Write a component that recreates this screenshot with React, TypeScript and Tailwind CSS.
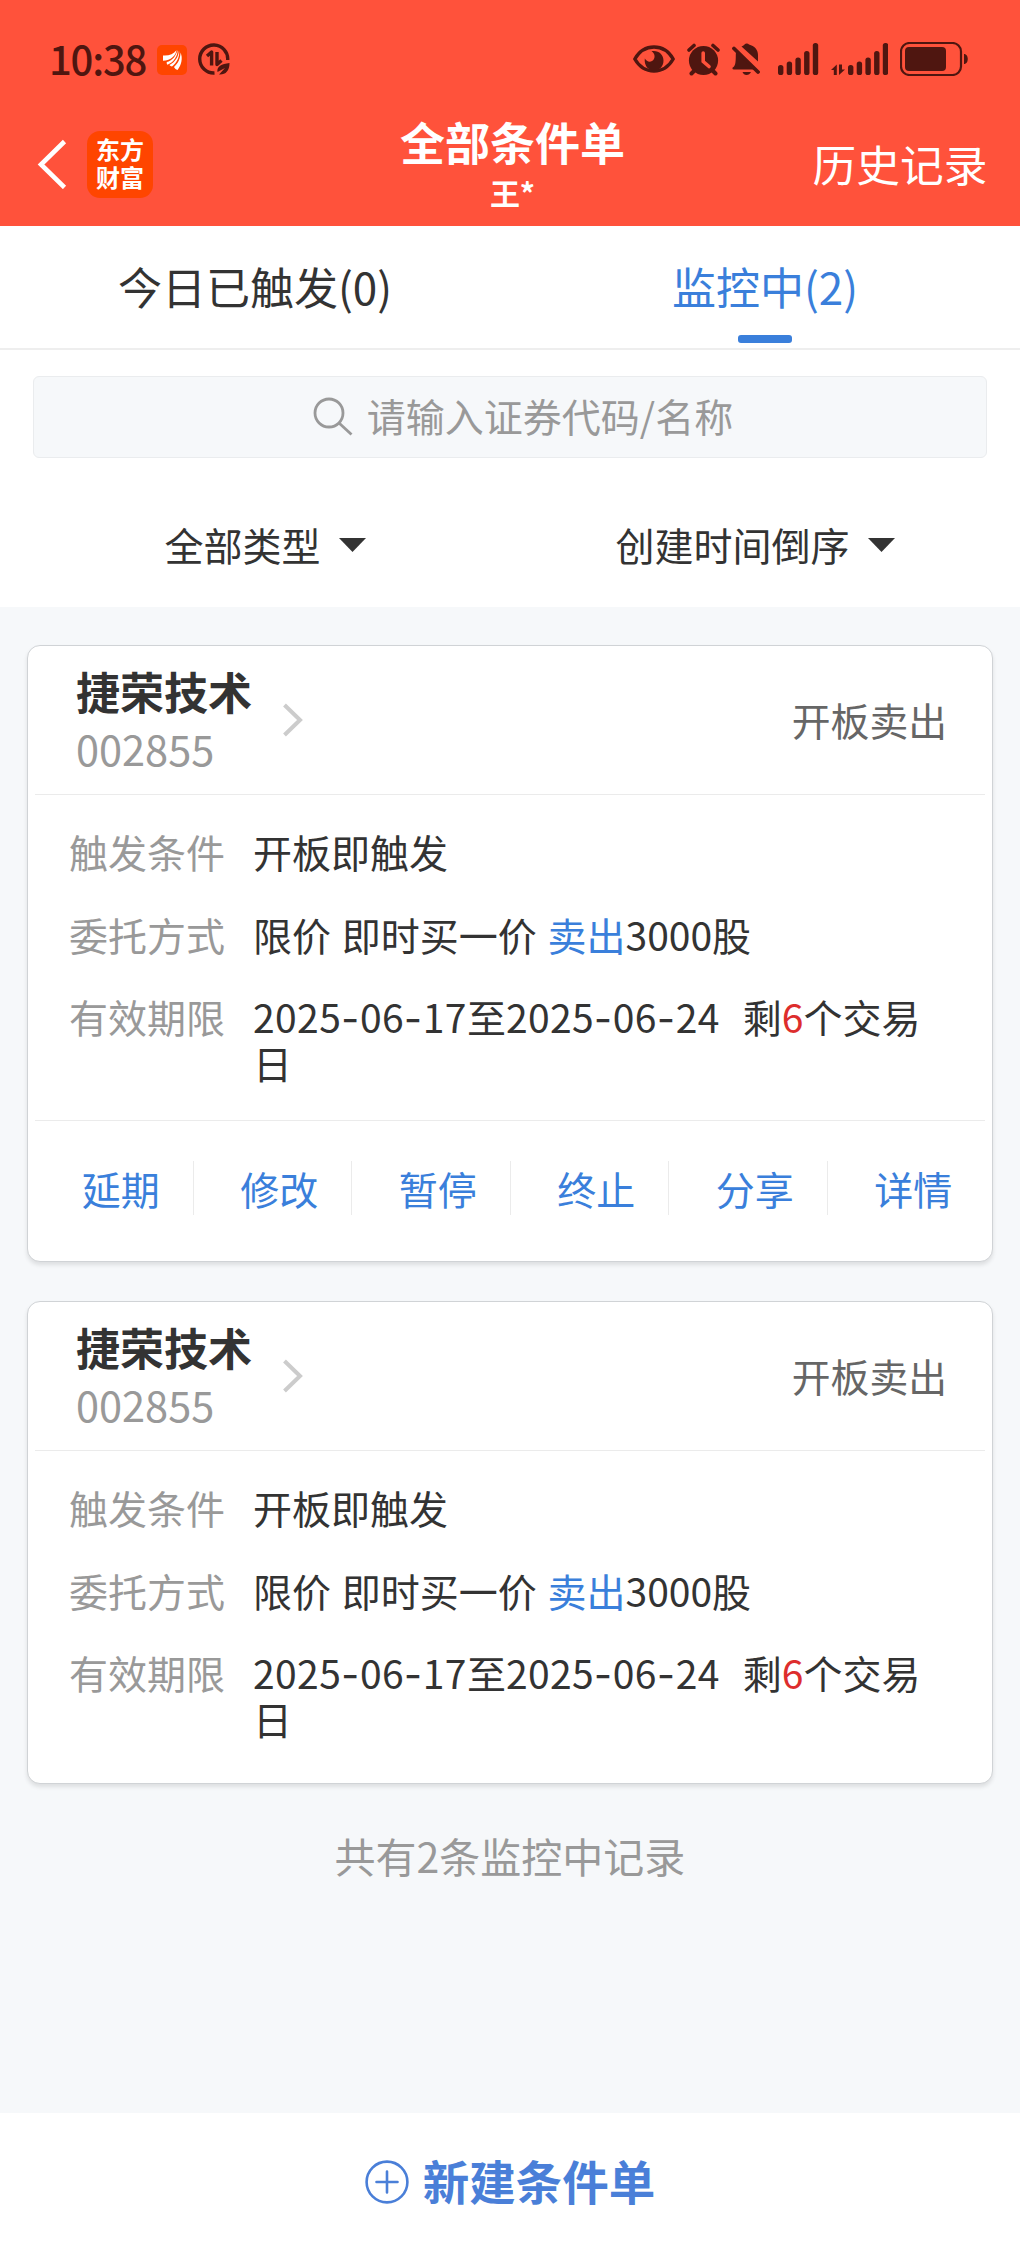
import { useState, type ReactNode } from "react";

type Order = {
  id: number;
  name: string;
  code: string;
  kind: string;
  condition: string;
  priceType: string;
  side: string;
  amount: string;
  from: string;
  to: string;
  daysLeft: number;
  expanded: boolean;
};

const baseOrder = {
  name: "捷荣技术",
  code: "002855",
  kind: "开板卖出",
  condition: "开板即触发",
  priceType: "限价 即时买一价",
  side: "卖出",
  amount: "3000股",
  from: "2025-06-17",
  to: "2025-06-24",
  daysLeft: 6,
};

const orders: Order[] = [
  { id: 1, ...baseOrder, expanded: true },
  { id: 2, ...baseOrder, expanded: false },
];

const tabs = ["今日已触发(0)", "监控中(2)"];
const filters = ["全部类型", "创建时间倒序"];
const actions = ["延期", "修改", "暂停", "终止", "分享", "详情"];

function SignalBars() {
  return (
    <g>
      <rect x="0" y="22" width="5.4" height="10" rx="2.6" />
      <rect x="8.7" y="18.5" width="5.4" height="13.5" rx="2.6" />
      <rect x="17.4" y="14.5" width="5.4" height="17.5" rx="2.6" />
      <rect x="26.1" y="8" width="5.4" height="24" rx="2.6" />
      <rect x="34.8" y="0" width="5.4" height="32" rx="2.6" />
    </g>
  );
}

function StatusBar() {
  return (
    <div className="flex h-[118px] items-start justify-between pt-[42px] pr-[52px] pl-[49px] text-[#4f1610]">
      <div className="flex items-center">
        <span className="w-[108px] pb-0.5 text-[40px] leading-[32px] font-medium tracking-[-1.200px]">10:38</span>
        <svg className="mt-px h-[30px] w-[30px]" viewBox="0 0 30 30">
          <rect width="30" height="30" rx="5" fill="#ff4500" />
          <g fill="#fff">
            <path d="M6 10.5C12 11 16.500 9 19.500 5.200C19 10 14 15.500 6 15.800Z" />
            <path d="M20.500 5C20.800 11 17 17 10.500 19.800C9.800 19 9.500 18 9.800 17C15 16 19 11 20.500 5Z" />
            <path d="M22 5.500C23 11 20 18 15 21.500C14 21.300 13 20.800 12.500 20C18 17 21.500 12 22 5.500Z" />
            <path d="M23.500 7.500C26 13 24.500 20 20.500 25C19 24.500 17.800 23.500 17 22C21 18.500 23.500 13.500 23.500 7.500Z" />
          </g>
        </svg>
        <svg className="ml-[11px] h-8 w-8" viewBox="0 0 32 32" fill="none" stroke="currentColor">
          <path d="M16.500 30A14 14 0 1 1 29.700 17" strokeWidth="3.400" />
          <path d="M9 13L13.600 9V22.500M19 9V21.500L23.500 17.500" strokeWidth="3.400" strokeLinejoin="round" />
          <path d="M31.500 20C31.500 28 27.500 32 21 31.500L27 25L19.500 29C18.500 23.500 23.500 21 31.500 20Z" fill="currentColor" stroke="none" />
        </svg>
      </div>

      <div className="flex items-start">
        <svg className="mt-[3px] h-[28px] w-[42px]" viewBox="0 0 42 28" fill="none">
          <path d="M1.800 14C11-2 31-2 40.200 14C31 30 11 30 1.800 14Z" stroke="currentColor" strokeWidth="3.400" strokeLinejoin="round" />
          <path d="M18.500 6.200C25.500 5 30.500 9.500 30.500 15.500C30.500 21.500 26.500 25.500 21 25.500C15 25.500 11 20.500 11.800 13.500C13.500 16.500 16.500 17.500 19 16C22.500 14 22.500 8.500 18.500 6.200Z" fill="currentColor" />
        </svg>
        <svg className="mt-px ml-3 h-[33px] w-[33px]" viewBox="0 0 33 33" fill="none" stroke="currentColor" strokeLinecap="round">
          <circle cx="16.500" cy="17.500" r="14.600" fill="currentColor" stroke="none" />
          <path d="M2 7L7 2.500M31 7L26 2.500" strokeWidth="3.600" />
          <path d="M7 28L4.500 30.500M26 28L28.500 30.500" strokeWidth="4" />
          <path d="M16.200 10V18.500L22 23.500" stroke="#ff523b" strokeWidth="3.600" />
        </svg>
        <svg className="mt-px ml-3 h-8 w-[28px]" viewBox="0 0 28 32" fill="currentColor">
          <path d="M9.500 3.500C11 2.800 12 2.400 12.500 1.500C13.500 0 16 0 17 1.500C22.500 3 26 6.500 26 12V18.500Z" />
          <path d="M4.500 8.500L22.500 26.500H2C0 26.500 0 24.500 1.500 24C3.500 22.500 3.800 18 3.800 12C3.800 10.500 4 9.500 4.500 8.500Z" />
          <path d="M2 5.500L26 29" stroke="currentColor" strokeWidth="3.800" strokeLinecap="round" />
          <path d="M10.500 29H19C18 31 16.500 32 14.500 32C12.500 32 11.300 31 10.500 29Z" />
        </svg>
        <svg className="mt-px ml-[18px] h-8 w-[41px]" viewBox="0 0 41 32" fill="currentColor">
          <SignalBars />
        </svg>
        <svg className="mt-px ml-3 h-8 w-[57px]" viewBox="0 0 57 32" fill="currentColor">
          <path d="M0 27L5.800 21.500V32H2.800V27ZM8 21.500H11V26.500H14L8 32Z" />
          <g transform="translate(17 0)">
            <SignalBars />
          </g>
        </svg>
        <svg className="ml-3 h-[34px] w-[68px]" viewBox="0 0 68 34" fill="currentColor">
          <rect x="1" y="1" width="60" height="32" rx="8.500" fill="none" stroke="currentColor" strokeWidth="2.200" />
          <rect x="5" y="5" width="41" height="24" rx="4" />
          <path d="M64 12C69 12 69 22 64 22Z" />
        </svg>
      </div>
    </div>
  );
}

function Header() {
  return (
    <header className="h-[226px] bg-[#ff523b]">
      <StatusBar />
      <div className="flex h-[92px] items-center justify-between pr-[32px] pl-[37px] text-white">
        <div className="flex w-[176px] items-center">
          <svg className="h-[50px] w-[30px]" viewBox="0 0 30 50" fill="none" stroke="currentColor" strokeWidth="4.600">
            <path d="M27.500 2.500L4 25.500L27.500 48.500" />
          </svg>
          <div className="ml-5 flex h-[67px] w-[66px] flex-col items-center justify-center rounded-[13px] bg-[#ff4500] pb-[3px] text-[24px] leading-[28px] font-bold">
            <span>东方</span>
            <span>财富</span>
          </div>
        </div>
        <div className="flex flex-col items-center pt-1 font-bold">
          <h1 className="text-[45px] leading-[46px]">全部条件单</h1>
          <span className="pt-[5px] text-[30px] leading-[44px]">王*</span>
        </div>
        <button className="w-[176px] pb-[3px] text-[43.700px] leading-[60px]">历史记录</button>
      </div>
    </header>
  );
}

function Row({ label, children }: { label: string; children: ReactNode }) {
  return (
    <div className="flex text-[39px] leading-[46px]">
      <span className="w-[184px] shrink-0 text-[#999]">{label}</span>
      <span className="flex-1 text-[#333] [word-spacing:2px]">{children}</span>
    </div>
  );
}

function DateText({ value }: { value: string }) {
  return (
    <>
      {value.split("-").map((part, i) => (
        <span key={i}>
          {i > 0 && <span className="font-['Inter'] leading-none tracking-[0.800px]">-</span>}
          <span className="tracking-[0.400px]">{part}</span>
        </span>
      ))}
    </>
  );
}

function OrderCard({ order }: { order: Order }) {
  return (
    <section className="rounded-[13px] border border-[#d0d3d6] bg-white px-[7px] shadow-[0_3px_4px_rgba(0,0,0,0.1)]">
      <div className="flex h-[149px] items-center justify-between border-b border-[#ebebeb] pr-[38px] pl-[41px]">
        <div className="flex items-center">
          <div>
            <h2 className="text-[44px] leading-[56px] font-bold text-[#333]">{order.name}</h2>
            <p className="text-[41.500px] leading-[58px] text-[#999]">{order.code}</p>
          </div>
          <svg className="ml-[31px] h-[34px] w-5" viewBox="0 0 20 34" fill="none" stroke="#ccc" strokeWidth="4">
            <path d="M1.500 2L17 17L1.500 32" />
          </svg>
        </div>
        <span className="pb-[2px] text-[38.800px] text-[#666]">{order.kind}</span>
      </div>

      <div className={`flex flex-col gap-[36.500px] pt-[33px] pr-[55px] pl-[34px] ${order.expanded ? "pb-[35px]" : "pb-[42px]"}`}>
        <Row label="触发条件">{order.condition}</Row>
        <Row label="委托方式">
          {order.priceType} <span className="text-[#3a7fdb]">{order.side}</span>
          {order.amount}
        </Row>
        <Row label="有效期限">
          <DateText value={order.from} />至<DateText value={order.to} />
          <span className="ml-[23px]">剩</span>
          <span className="text-[#dd2d2d]">{order.daysLeft}</span>个交易日
        </Row>
      </div>

      {order.expanded && (
        <div className="flex h-[141px] items-center border-t border-[#ebebeb] pb-[7px]">
          {actions.map((action) => (
            <button
              key={action}
              className="h-[54px] flex-1 border-r border-[#ebebeb] pl-[14px] text-[39px] leading-[48px] text-[#3a7fdb] last:border-r-0"
            >
              {action}
            </button>
          ))}
        </div>
      )}
    </section>
  );
}

export default function App() {
  const [activeTab, setActiveTab] = useState(1);

  return (
    <main className="flex h-[2250px] w-[1020px] flex-col bg-[#f6f8fa] font-['Noto_Sans_CJK_SC',sans-serif] text-[#333]">
      <Header />

      <div className="h-[381px] bg-white">
        <nav className="flex h-[124px] border-b-2 border-[#eee]">
          {tabs.map((tab, i) => (
            <button
              key={tab}
              onClick={() => setActiveTab(i)}
              className={`flex flex-1 flex-col items-center pt-[30px] text-[44px] leading-[60px] ${i === activeTab ? "text-[#3a7fdb]" : ""}`}
            >
              {tab}
              {i === activeTab && <span className="mt-[19px] h-2 w-[54px] rounded-[3px] bg-[#3a7fdb]" />}
            </button>
          ))}
        </nav>

        <div className="mx-[33px] mt-[26px] flex h-[82px] items-center justify-center rounded-md border border-[#eaecee] bg-[#f6f8fa] pl-[26px] text-[39px] text-[#999]">
          <svg className="mr-[14px] h-10 w-10" viewBox="0 0 40 40" fill="none" stroke="currentColor" strokeWidth="2.800">
            <circle cx="16" cy="16" r="14" />
            <path d="M26 26L38.500 37.500" />
          </svg>
          <span className="pb-1 leading-[56px]">请输入证券代码/名称</span>
        </div>

        <div className="flex px-5 pt-[57px]">
          {filters.map((filter) => (
            <button key={filter} className="flex flex-1 items-center justify-center gap-[18px] text-[39px] leading-[58px]">
              {filter}
              <svg className="mt-0.5 h-[14px] w-[27px]" viewBox="0 0 27 14" fill="currentColor">
                <path d="M0 0H27L13.500 14Z" />
              </svg>
            </button>
          ))}
        </div>
      </div>

      <div className="flex flex-1 flex-col gap-[39px] px-[27px] pt-[38px]">
        {orders.map((order) => (
          <OrderCard key={order.id} order={order} />
        ))}
        <p className="mt-1 text-center text-[41px] leading-[56px] text-[#999]">共有2条监控中记录</p>
      </div>

      <footer className="flex h-[137px] items-center justify-center bg-white text-[46.500px] font-bold text-[#4a7fd8]">
        <svg className="mr-[14px] h-11 w-11" viewBox="0 0 44 44" fill="none" stroke="currentColor" strokeWidth="2.600">
          <circle cx="22" cy="22" r="20.400" />
          <path d="M22 11.500V32.500M11.500 22H32.500" strokeLinecap="round" />
        </svg>
        <span className="pb-[3px]">新建条件单</span>
      </footer>
    </main>
  );
}
